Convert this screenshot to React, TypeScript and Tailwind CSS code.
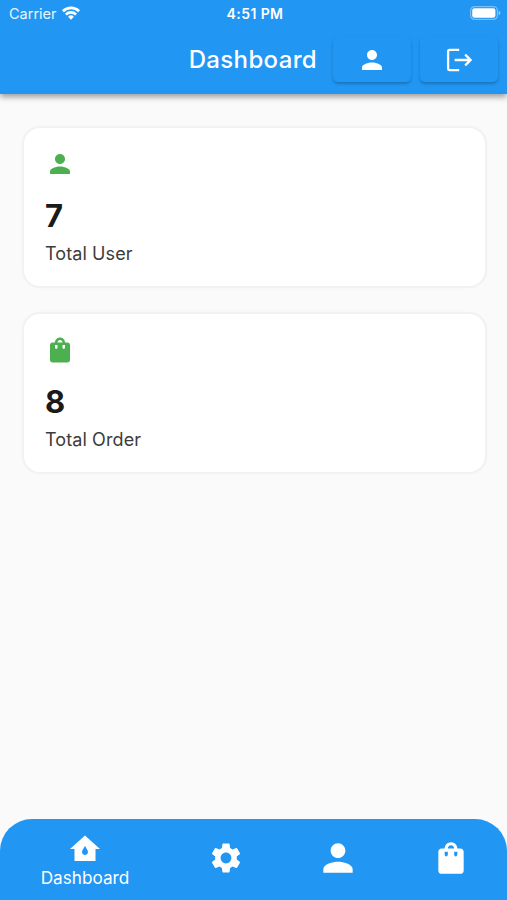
import type { ReactNode } from 'react';

type IconProps = { className?: string };

function PersonIcon({ className }: IconProps) {
  return (
    <svg viewBox="0 0 24 24" fill="currentColor" className={className}>
      <path d="M12 12c2.21 0 4-1.79 4-4s-1.79-4-4-4-4 1.79-4 4 1.79 4 4 4zm0 2c-2.67 0-8 1.34-8 4v2h16v-2c0-2.66-5.33-4-8-4z" />
    </svg>
  );
}

function BagIcon({ className }: IconProps) {
  return (
    <svg viewBox="0 0 24 24" fill="currentColor" className={className}>
      <path d="M18 6h-2c0-2.21-1.79-4-4-4S8 3.79 8 6H6c-1.1 0-2 .9-2 2v12c0 1.1.9 2 2 2h12c1.1 0 2-.9 2-2V8c0-1.1-.9-2-2-2zm-8 4c0 .55-.45 1-1 1s-1-.45-1-1V8h2v2zm2-6c1.1 0 2 .9 2 2h-4c0-1.1.9-2 2-2zm4 6c0 .55-.45 1-1 1s-1-.45-1-1V8h2v2z" />
    </svg>
  );
}

function HomeIcon({ className }: IconProps) {
  return (
    <svg viewBox="0 0 24 24" fill="currentColor" className={className}>
      <path d="M12 3L2 12h3v8h14v-8h3L12 3zm0 13c-1.1 0-2-.9-2-2s2-4 2-4 2 2.9 2 4-.9 2-2 2z" />
    </svg>
  );
}

function SettingsIcon({ className }: IconProps) {
  return (
    <svg viewBox="0 0 24 24" fill="currentColor" className={className}>
      <path d="M19.14 12.94c.04-.3.06-.61.06-.94 0-.32-.02-.64-.07-.94l2.03-1.58c.18-.14.23-.41.12-.61l-1.92-3.32c-.12-.22-.37-.29-.59-.22l-2.39.96c-.5-.38-1.03-.7-1.62-.94l-.36-2.54c-.04-.24-.24-.41-.48-.41h-3.84c-.24 0-.43.17-.47.41l-.36 2.54c-.59.24-1.13.57-1.62.94l-2.39-.96c-.22-.08-.47 0-.59.22L2.74 8.87c-.12.21-.08.47.12.61l2.03 1.58c-.05.3-.09.63-.09.94s.02.64.07.94l-2.03 1.58c-.18.14-.23.41-.12.61l1.92 3.32c.12.22.37.29.59.22l2.39-.96c.5.38 1.03.7 1.62.94l.36 2.54c.05.24.24.41.48.41h3.84c.24 0 .44-.17.47-.41l.36-2.54c.59-.24 1.13-.56 1.62-.94l2.39.96c.22.08.47 0 .59-.22l1.92-3.32c.12-.22.07-.47-.12-.61l-2.01-1.58zM12 15.6c-1.98 0-3.6-1.62-3.6-3.6s1.62-3.6 3.6-3.6 3.6 1.62 3.6 3.6-1.62 3.6-3.6 3.6z" />
    </svg>
  );
}

function LogoutIcon({ className }: IconProps) {
  return (
    <svg viewBox="0 0 26 24" fill="none" stroke="currentColor" strokeWidth="2.3" className={className}>
      <path d="M13.2 1.9H3.4a1.3 1.3 0 0 0-1.3 1.3v17.6a1.3 1.3 0 0 0 1.3 1.3h9.8" />
      <path d="M8.6 12h16M19.2 6.6l5.4 5.4-5.4 5.4" />
    </svg>
  );
}

function WifiIcon({ className }: IconProps) {
  return (
    <svg viewBox="0 0 18 14" fill="none" stroke="currentColor" strokeWidth="2.6" className={className}>
      <path d="M.9 5.2a11.6 11.6 0 0 1 16.2 0" />
      <path d="M3.9 8.5a7.3 7.3 0 0 1 10.2 0" />
      <path d="M9 13.7l-2.9-3a4.2 4.2 0 0 1 5.8 0z" fill="currentColor" stroke="none" />
    </svg>
  );
}

function BatteryIcon({ className }: IconProps) {
  return (
    <svg viewBox="0 0 31 14" className={className}>
      <rect x="0.6" y="0.6" width="26.8" height="12.8" rx="4" fill="none" stroke="#fff" strokeOpacity="0.4" strokeWidth="1.2" />
      <rect x="2.2" y="2.2" width="23.2" height="9.6" rx="2.4" fill="#fff" />
      <path d="M28.6 4.8c1.1.4 1.8 1.2 1.8 2.2s-.7 1.8-1.8 2.2z" fill="#fff" fillOpacity="0.5" />
    </svg>
  );
}

function StatCard({ icon, value, label }: { icon: ReactNode; value: number; label: string }) {
  return (
    <div className="h-[162px] rounded-[18px] border-2 border-[#f2f2f2] bg-white pt-[21px] pl-[21px] shadow-[0_0_2px_rgba(0,0,0,0.03)]">
      <div className="text-[#4caf50]">{icon}</div>
      <div className="mt-[19px] text-[31px] leading-9 font-bold text-[#1a1a1a]">{value}</div>
      <div className="mt-2 text-[18px] leading-6 tracking-[0.1px] text-[#3c3c3c]">{label}</div>
    </div>
  );
}

function HeaderButton({ label, children }: { label: string; children: ReactNode }) {
  return (
    <button
      aria-label={label}
      className="flex h-[45px] w-[78px] items-center justify-center rounded-[5px] bg-[#2196f3] shadow-[0_2px_3px_rgba(0,0,0,0.22)]"
    >
      {children}
    </button>
  );
}

export default function App() {
  return (
    <div className="flex h-[900px] w-[507px] flex-col overflow-hidden bg-[#fafafa] font-['Inter','Noto_Sans',sans-serif]">
      <header className="h-[94px] shrink-0 bg-[#2196f3] text-white shadow-[0_3px_6px_rgba(0,0,0,0.38)]">
        {/* Status bar */}
        <div className="grid h-7 grid-cols-3 items-center pr-[6px] pl-[9px]">
          <div className="flex items-center gap-[5px]">
            <span className="text-[14.5px] text-white/90">Carrier</span>
            <WifiIcon className="mb-[2px] h-[14px] w-[18px]" />
          </div>
          <span className="pb-[2px] text-center text-[14px] font-semibold tracking-[0.4px]">4:51 PM</span>
          <BatteryIcon className="mb-[2px] h-[14px] w-[31px] justify-self-end" />
        </div>

        {/* Title and actions */}
        <div className="flex h-[63px] items-center justify-end pr-[9px]">
          <h1 className="mr-4 text-[24px] leading-8 font-[450] tracking-[0.35px]">Dashboard</h1>
          <div className="flex gap-[9px]">
            <HeaderButton label="Profile">
              <PersonIcon className="size-[30px]" />
            </HeaderButton>
            <HeaderButton label="Log out">
              <LogoutIcon className="mr-px h-6 w-[26px]" />
            </HeaderButton>
          </div>
        </div>
      </header>

      <main className="flex flex-1 flex-col gap-6 pt-8 pr-[20px] pl-[22px]">
        <StatCard icon={<PersonIcon className="size-[30px]" />} value={7} label="Total User" />
        <StatCard icon={<BagIcon className="size-[30px]" />} value={8} label="Total Order" />
      </main>

      {/* Bottom navigation */}
      <nav className="grid h-[81px] shrink-0 grid-cols-[170px_1fr_1fr_1fr] items-center rounded-t-[32px] bg-[#2196f3] pb-[3px] text-white">
        <div className="flex flex-col items-center pt-1">
          <HomeIcon className="size-9" />
          <span className="text-[17.2px] leading-[22px]">Dashboard</span>
        </div>
        <SettingsIcon className="size-9 justify-self-center" />
        <PersonIcon className="size-11 justify-self-center" />
        <BagIcon className="size-[38px] justify-self-center" />
      </nav>
    </div>
  );
}
